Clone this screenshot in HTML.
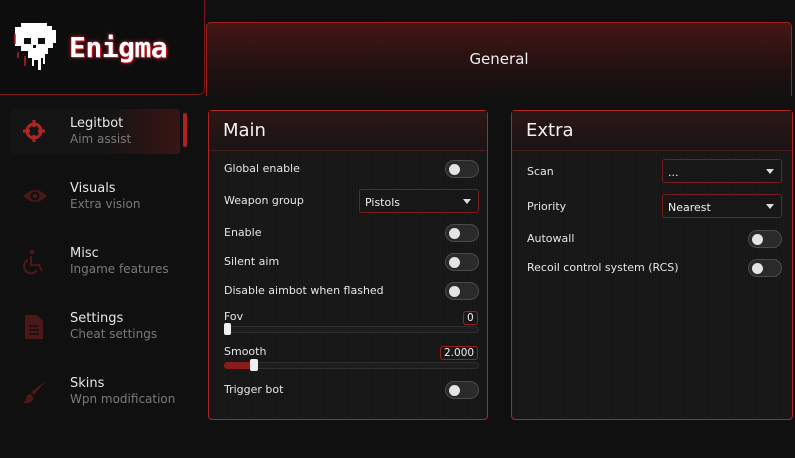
<!DOCTYPE html>
<html><head><style>
*{margin:0;padding:0;box-sizing:border-box}
body{width:795px;height:458px;background:#101010;font-family:"DejaVu Sans","Liberation Sans",sans-serif;color:#e8e8e8;position:relative;overflow:hidden}
.abs{position:absolute}
.logo{left:-10px;top:-10px;width:215px;height:105px;border:1px solid #7a1a1a;border-top:none;border-left:none;border-radius:0 0 6px 0;background:#0d0d0d}
.tab{left:206px;top:22px;width:586px;height:74px;border:1px solid #a02020;border-bottom:none;border-radius:5px 5px 0 0;background:linear-gradient(#451616,#1e1010 70%,#141010)}
.tab span{position:absolute;left:0;right:0;top:27px;text-align:center;font-size:15px;color:#f0f0f0}
.nav{left:10px;width:170px;height:45px}
.nav .t{position:absolute;left:60px;top:7px;font-size:13px;color:#e6e6e6;white-space:nowrap}
.nav .s{position:absolute;left:60px;top:23px;font-size:12px;color:#7a7a7a;white-space:nowrap}
.nav svg{position:absolute;left:12px;top:10px}
.panel{border:1px solid #b02525;border-radius:4px;background:repeating-linear-gradient(90deg,#191919 0 2px,#151515 2px 3px)}
.ph{position:absolute;left:0;right:0;top:0;height:40px;background:linear-gradient(#2c1616,#1a1414);border-bottom:1px solid #4a1c1c}
.ph span{position:absolute;left:14px;top:9px;font-size:18px;color:#f2f2f2}
.lab{position:absolute;font-size:11px;color:#e6e6e6}
.tg{position:absolute;width:34px;height:18px;border-radius:9px;background:#2a2a2a;border:1px solid #4a4a4a}
.tg:after{content:"";position:absolute;left:3px;top:3px;width:11px;height:11px;border-radius:50%;background:#e4e4e4}
.dd{position:absolute;height:24px;border:1px solid #7a1c1c;border-radius:3px;background:#171717;font-size:11px;padding:6px 0 0 5px;color:#f0f0f0}
.dd:after{content:"";position:absolute;right:7px;top:9px;border:4px solid transparent;border-top:5px solid #ddd}
.track{position:absolute;height:7px;border-radius:4px;background:#1e1e1e;border:1px solid #2e2e2e}
.val{position:absolute;height:14px;border:1px solid #9a2020;border-radius:3px;font-size:10.5px;padding:0 3px;line-height:12px;color:#f0f0f0}
</style></head><body>
<div class="abs logo"></div>
<svg class="abs" style="left:13px;top:22px" width="44" height="50" viewBox="0 0 44 50">
<path d="M8 1h26v3h5v4h4v13h-3v5h-5v6h-3v10h-2v-6h-2v12h-3v-10h-4v6h-2v-8h-4v-7H8v-5H2V5h6z" fill="#fff"/>
<path d="M2 12v10M5 30v6M12 34v10" stroke="#c02020" stroke-width="1.5"/>
<rect x="11" y="16" width="7" height="6" fill="#111"/><rect x="25" y="16" width="7" height="6" fill="#111"/>
<rect x="20" y="23" width="3" height="3" fill="#111"/>
</svg>
<div class="abs" style="left:69px;top:31px;font-family:'DejaVu Sans Mono',monospace;font-weight:bold;font-size:28px;letter-spacing:-0.5px;color:#fff;text-shadow:0 0 4px #e02030,1px 1px 0 #c01020">Enigma</div>
<div class="abs tab"><span>General</span></div>

<div class="abs nav" style="top:109px;background:linear-gradient(90deg,#141414 55%,#3a1414);border-radius:3px">
<svg width="24" height="24" viewBox="0 0 24 24"><circle cx="12" cy="12" r="7" fill="none" stroke="#b02525" stroke-width="3"/><path d="M12 1v7M12 16v7M1 12h7M16 12h7" stroke="#b02525" stroke-width="3"/></svg>
<div class="t">Legitbot</div><div class="s">Aim assist</div></div>
<div class="abs" style="left:183px;top:113px;width:4px;height:34px;background:#b02020;border-radius:2px"></div>
<div class="abs nav" style="top:174px"><svg width="26" height="24" viewBox="0 0 26 24"><path d="M1 12Q13 0 25 12Q13 24 1 12z" fill="#4a1818"/><circle cx="13" cy="12" r="4.5" fill="#101010"/><circle cx="13" cy="12" r="2.5" fill="#4a1818"/></svg><div class="t">Visuals</div><div class="s">Extra vision</div></div>
<div class="abs nav" style="top:239px"><svg width="24" height="26" viewBox="0 0 24 26"><circle cx="10" cy="3" r="2.5" fill="#4a1818"/><path d="M9 7v9h8l3 6M6 11a7 7 0 1 0 9 10" fill="none" stroke="#4a1818" stroke-width="2.2"/></svg><div class="t">Misc</div><div class="s">Ingame features</div></div>
<div class="abs nav" style="top:304px"><svg width="24" height="26" viewBox="0 0 24 26"><path d="M3 1h12l6 6v18H3z" fill="#4a1818"/><path d="M7 12h10M7 16h10M7 20h10" stroke="#101010" stroke-width="1.5"/></svg><div class="t">Settings</div><div class="s">Cheat settings</div></div>
<div class="abs nav" style="top:369px"><svg width="26" height="26" viewBox="0 0 26 26"><path d="M24 2L12 16l-3-3z" fill="#4a1818"/><path d="M8 15q4 1 3 6q-3 4-10 3q3-2 3-5q1-4 4-4z" fill="#4a1818"/></svg><div class="t">Skins</div><div class="s">Wpn modification</div></div>

<div class="abs panel" style="left:208px;top:110px;width:280px;height:310px">
<div class="ph"><span>Main</span></div>
<div class="lab" style="left:15px;top:51px">Global enable</div><div class="tg" style="left:236px;top:49px"></div>
<div class="lab" style="left:15px;top:83px">Weapon group</div><div class="dd" style="left:150px;top:78px;width:120px">Pistols</div>
<div class="lab" style="left:15px;top:115px">Enable</div><div class="tg" style="left:236px;top:113px"></div>
<div class="lab" style="left:15px;top:144px">Silent aim</div><div class="tg" style="left:236px;top:142px"></div>
<div class="lab" style="left:15px;top:173px">Disable aimbot when flashed</div><div class="tg" style="left:236px;top:171px"></div>
<div class="lab" style="left:15px;top:199px">Fov</div><div class="val" style="left:254px;top:200px">0</div>
<div class="track" style="left:15px;top:215px;width:255px"></div><div class="abs" style="left:15px;top:212px;width:7px;height:12px;background:#f0f0f0;border-radius:2px"></div>
<div class="lab" style="left:15px;top:234px">Smooth</div><div class="val" style="left:231px;top:235px">2.000</div>
<div class="track" style="left:15px;top:251px;width:255px"></div><div class="abs" style="left:15px;top:251px;width:30px;height:7px;background:#8a1c1c;border-radius:4px"></div><div class="abs" style="left:41px;top:248px;width:8px;height:12px;background:#f0f0f0;border-radius:2px"></div>
<div class="lab" style="left:15px;top:272px">Trigger bot</div><div class="tg" style="left:236px;top:270px"></div>
</div>

<div class="abs panel" style="left:511px;top:110px;width:282px;height:310px">
<div class="ph"><span>Extra</span></div>
<div class="lab" style="left:15px;top:54px">Scan</div><div class="dd" style="left:150px;top:48px;width:120px">...</div>
<div class="lab" style="left:15px;top:89px">Priority</div><div class="dd" style="left:150px;top:83px;width:120px">Nearest</div>
<div class="lab" style="left:15px;top:121px">Autowall</div><div class="tg" style="left:236px;top:119px"></div>
<div class="lab" style="left:15px;top:150px">Recoil control system (RCS)</div><div class="tg" style="left:236px;top:148px"></div>
</div>
</body></html>
